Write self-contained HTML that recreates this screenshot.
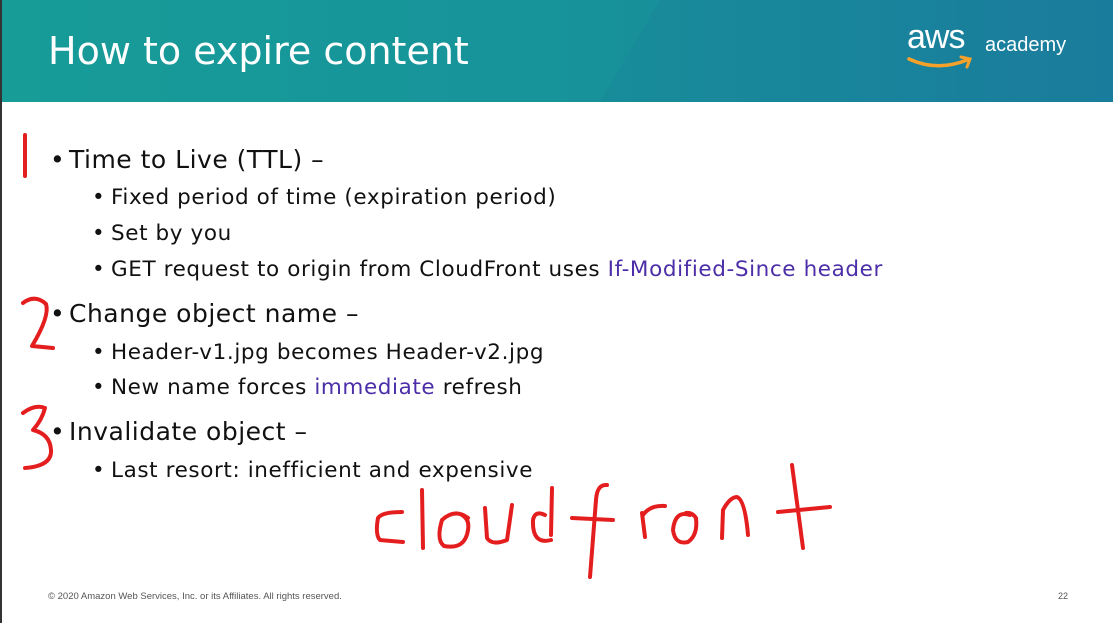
<!DOCTYPE html>
<html><head><style>
body{margin:0;width:1113px;height:623px;overflow:hidden;background:#fff;font-family:"DejaVu Sans","Liberation Sans",sans-serif;position:relative}
.hdr{position:absolute;left:0;top:0;width:1113px;height:102px;background:linear-gradient(90deg,#179c98 0%,#17939a 50%,#1a7f9e 100%)}
.hdr:after{content:"";position:absolute;left:600px;top:0;width:513px;height:102px;background:rgba(30,100,150,0.10);clip-path:polygon(60px 0,100% 0,100% 100%,0 100%)}
.lb{position:absolute;left:0;top:0;width:2px;height:623px;background:#333;z-index:5}
.t{position:absolute;left:48px;top:29px;color:#fff;font-size:38px;z-index:2}
.l{position:absolute;white-space:nowrap;color:#111;line-height:30px}
.l1{font-size:25px;left:50px;letter-spacing:0.5px}
.l2{font-size:21.5px;left:92px;letter-spacing:0.6px}
.l1 b,.l2 b{font-weight:normal;display:inline-block;letter-spacing:0}
.l1 b{width:19px}.l2 b{width:19px}
.p{color:#4b2ea8}
.ft{position:absolute;top:591px;font-size:9px;color:#555;font-family:"Liberation Sans",sans-serif}
</style></head><body>
<div class="hdr"></div><div class="lb"></div>
<div class="t">How to expire content</div>
<div style="position:absolute;left:907px;top:24px;z-index:3;color:#fff;font-family:'Liberation Sans',sans-serif">
<span style="font-size:34px;letter-spacing:-1px;position:absolute;left:0;top:-6px">aws</span>
<span style="font-size:20px;position:absolute;left:78px;top:10px">academy</span>
<svg style="position:absolute;left:0;top:30px" width="70" height="20"><path d="M2 5 Q30 18 60 6" stroke="#f7a12a" stroke-width="3.5" fill="none" stroke-linecap="round"/><path d="M54 3 L63 5 L60 13" stroke="#f7a12a" stroke-width="3" fill="none" stroke-linecap="round"/></svg>
</div>
<div class="l l1" style="top:145px"><b>•</b>Time to Live (TTL) –</div>
<div class="l l2" style="top:183px"><b>•</b>Fixed period of time (expiration period)</div>
<div class="l l2" style="top:219px"><b>•</b>Set by you</div>
<div class="l l2" style="top:255px"><b>•</b>GET request to origin from CloudFront uses <span class="p">If-Modified-Since header</span></div>
<div class="l l1" style="top:299px"><b>•</b>Change object name –</div>
<div class="l l2" style="top:338px"><b>•</b>Header-v1.jpg becomes Header-v2.jpg</div>
<div class="l l2" style="top:373px"><b>•</b>New name forces <span class="p">immediate</span> refresh</div>
<div class="l l1" style="top:417px"><b>•</b>Invalidate object –</div>
<div class="l l2" style="top:456px"><b>•</b>Last resort: inefficient and expensive</div>
<div class="ft" style="left:48px;font-size:9.5px">© 2020 Amazon Web Services, Inc. or its Affiliates. All rights reserved.</div>
<div class="ft" style="left:1058px">22</div>
<svg style="position:absolute;left:0;top:0" width="1113" height="623"><g stroke="#e41e1e" stroke-width="4" fill="none" stroke-linecap="round" stroke-linejoin="round">
<path d="M25 135 L25 176"/>
<path d="M23 303 Q35 294 46 304 Q50 316 32 346 L53 348"/>
<path d="M23 413 Q35 404 45 408 Q42 420 33 430 Q50 434 51 450 Q52 466 25 468"/>
<path d="M402 512 Q382 512 378 518 Q375 535 380 540 L403 542"/>
<path d="M422 490 L423 548"/>
<path d="M468 518 Q455 508 442 520 Q436 540 444 546 Q465 550 468 530 Q470 518 460 514"/>
<path d="M485 508 L487 538 Q492 546 507 540 L512 505"/>
<path d="M552 488 L551 535 M545 515 Q535 510 533 520 Q532 545 551 540"/>
<path d="M607 485 Q597 484 596 500 L590 577 M572 518 L613 520"/>
<path d="M642 513 L645 537 M643 515 Q650 505 665 506"/>
<path d="M690 515 Q675 510 673 530 Q675 545 688 542 Q698 535 696 518 Q692 512 686 513"/>
<path d="M722 538 L723 510 Q730 497 737 497 Q745 500 748 535"/>
<path d="M792 465 L803 548 M778 512 L830 507"/>
</g></svg>
</body></html>
